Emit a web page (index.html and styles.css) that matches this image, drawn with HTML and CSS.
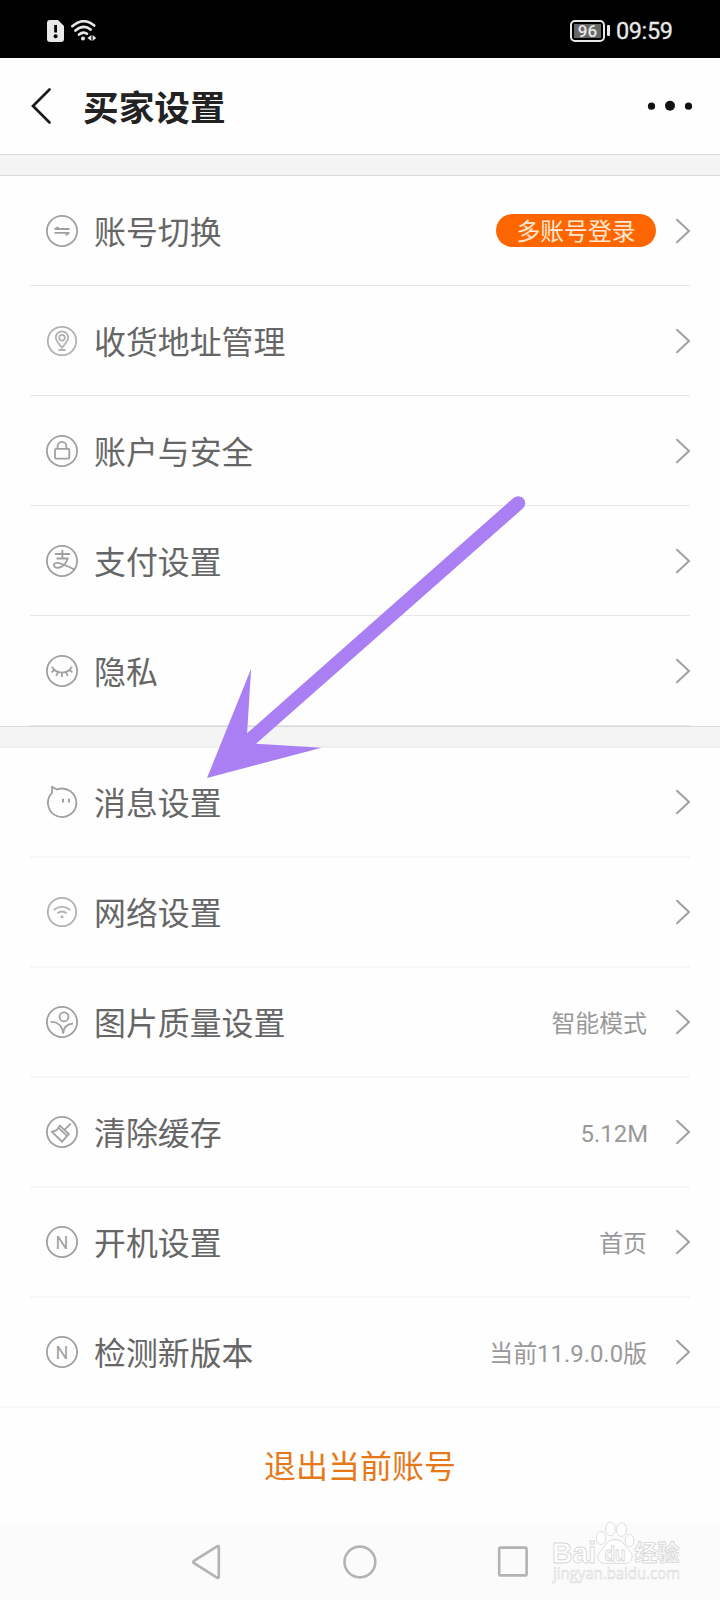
FILE: index.html
```html
<!DOCTYPE html>
<html lang="zh-CN">
<head>
<meta charset="utf-8">
<title>买家设置</title>
<link rel="stylesheet" href="styles.css">
</head>
<body>
<div class="screen">
  <div class="status">
    <div class="status-left">
      <svg width="18" height="22" viewBox="0 0 18 22"><path d="M3 0H11L17 6V19Q17 22 14 22H3Q0 22 0 19V3Q0 0 3 0Z" fill="#e8e8e8"/><path d="M8.6 5V12.5" stroke="#000" stroke-width="2.8"/><circle cx="8.6" cy="16.2" r="2" fill="#000"/></svg>
      <svg width="26" height="22" viewBox="0 0 26 22" fill="none" stroke="#e8e8e8" stroke-width="2.6" stroke-linecap="round"><path d="M1.3 6.2Q12.5-3.6 23.2 5.6"/><path d="M4.4 10.6Q12.5 3.8 19.6 9.6"/><path d="M8 14.6Q12.3 11 16 13.8"/><circle cx="12" cy="18.6" r="2" fill="#e8e8e8" stroke="none"/><path d="M20.4 15V21L16.4 18ZM21.6 15V21L25.2 18Z" fill="#e8e8e8" stroke="none"/></svg>
    </div>
    <div class="status-right">
      <div class="battery"><span class="level">96</span></div><i class="battery-tip"></i>
      <span class="clock">09:59</span>
    </div>
  </div>

  <header class="header">
    <svg class="back" width="22" height="38" viewBox="0 0 22 38" fill="none" stroke="#1a1a1a" stroke-width="2.7" stroke-linecap="round"><path d="M18.5 2.5L2 19L18.5 35.5"/></svg>
    <h1 class="title">买家设置</h1>
    <svg class="more" width="46" height="12" viewBox="0 0 46 12" fill="#111"><circle cx="4.5" cy="6.2" r="3.6"/><circle cx="23" cy="5.8" r="5"/><circle cx="41.5" cy="6.2" r="3.6"/></svg>
  </header>
  <div class="gap gap-top"></div>

  <div class="group">
    <div class="row">
      <svg class="icon" viewBox="0 0 32 32"><circle cx="16" cy="16" r="15.1"/><path d="M8.5 14H23.5M8.5 17.9H23.5M9 14L12.5 11.9M23 17.9L19.6 20.2"/></svg>
      <span class="label">账号切换</span><span class="badge">多账号登录</span>
      <svg class="chev" viewBox="0 0 16 26"><path d="M2 1.7L14 13L2 24.3"/></svg>
    </div>
    <div class="row">
      <svg class="icon pale" viewBox="0 0 32 32"><circle cx="16" cy="16" r="14.2"/><path d="M16 22.7C13.5 19.3 9.8 16.3 9.8 12.6A6.2 6.2 0 0 1 22.2 12.6C22.2 16.3 18.5 19.3 16 22.7ZM12.5 25H19.7"/><circle cx="16" cy="12.7" r="2.8"/></svg>
      <span class="label">收货地址管理</span>
      <svg class="chev" viewBox="0 0 16 26"><path d="M2 1.7L14 13L2 24.3"/></svg>
    </div>
    <div class="row">
      <svg class="icon" viewBox="0 0 32 32"><circle cx="16" cy="16" r="15.1"/><rect x="9" y="13.8" width="14.3" height="9.8" rx="1"/><path d="M11.6 13.6V11.2A4.4 4.4 0 0 1 20.4 11.2V13.6"/></svg>
      <span class="label">账户与安全</span>
      <svg class="chev" viewBox="0 0 16 26"><path d="M2 1.7L14 13L2 24.3"/></svg>
    </div>
    <div class="row">
      <svg class="icon" viewBox="0 0 32 32"><circle cx="16" cy="16" r="15.1"/><path d="M9 9H24M16.4 5V13.5M10.5 13.5H21.6C20.8 17 17.6 22.8 11.6 22.8C7 22.8 6.6 18.2 10.8 17.8C15 17.5 20 20.8 28.8 24.6"/></svg>
      <span class="label">支付设置</span>
      <svg class="chev" viewBox="0 0 16 26"><path d="M2 1.7L14 13L2 24.3"/></svg>
    </div>
    <div class="row">
      <svg class="icon" viewBox="0 0 32 32"><circle cx="16" cy="16" r="15.1"/><path d="M6 11.8C10.5 19.5 21.5 19.5 26 11.8M8.4 15L5.6 17.4M12 17.2L10.2 20.9M16 17.8V22M20 17.2L21.8 20.9M23.6 15L26.4 17.4"/></svg>
      <span class="label">隐私</span>
      <svg class="chev" viewBox="0 0 16 26"><path d="M2 1.7L14 13L2 24.3"/></svg>
    </div>
  </div>
  <div class="gap gap-mid"></div>

  <div class="group light">
    <div class="row">
      <svg class="icon" viewBox="0 0 32 32"><path d="M6 .9L11.2 3.5A14.2 14.2 0 1 1 5.8 7.1C6.4 5.6 6.1 3 6 .9Z"/><path d="M17 12.8V16.6M23 12.8V16.6" stroke-width="2"/></svg>
      <span class="label">消息设置</span>
      <svg class="chev" viewBox="0 0 16 26"><path d="M2 1.7L14 13L2 24.3"/></svg>
    </div>
    <div class="row">
      <svg class="icon pale" viewBox="0 0 32 32"><circle cx="16" cy="16" r="14.2"/><path d="M7.7 14Q16 7.2 24.3 14M11.3 17.4Q16 13.6 20.7 17.4"/><circle cx="16" cy="20.8" r=".6"/></svg>
      <span class="label">网络设置</span>
      <svg class="chev" viewBox="0 0 16 26"><path d="M2 1.7L14 13L2 24.3"/></svg>
    </div>
    <div class="row">
      <svg class="icon" viewBox="0 0 32 32"><circle cx="16" cy="16" r="15.1"/><circle cx="18" cy="10.8" r="4.5"/><path d="M4.8 16C11 15.6 16.6 19.5 17.2 27.6C17.6 21.6 21 17.8 27 17.6"/></svg>
      <span class="label">图片质量设置</span><span class="value">智能模式</span>
      <svg class="chev" viewBox="0 0 16 26"><path d="M2 1.7L14 13L2 24.3"/></svg>
    </div>
    <div class="row">
      <svg class="icon" viewBox="0 0 32 32"><circle cx="16" cy="16" r="15.1"/><path d="M11.8 11.2L21.8 20.6M13.9 9.6L22.8 18L16 25.6L6 15.8L10.6 14.2ZM18.4 13.8L24.8 7.6"/></svg>
      <span class="label">清除缓存</span><span class="value latin">5.12M</span>
      <svg class="chev" viewBox="0 0 16 26"><path d="M2 1.7L14 13L2 24.3"/></svg>
    </div>
    <div class="row">
      <svg class="icon" viewBox="0 0 32 32"><circle cx="16" cy="16" r="15.1"/><text class="letter" x="16" y="22.6">N</text></svg>
      <span class="label">开机设置</span><span class="value">首页</span>
      <svg class="chev" viewBox="0 0 16 26"><path d="M2 1.7L14 13L2 24.3"/></svg>
    </div>
    <div class="row">
      <svg class="icon" viewBox="0 0 32 32"><circle cx="16" cy="16" r="15.1"/><text class="letter" x="16" y="22.6">N</text></svg>
      <span class="label">检测新版本</span><span class="value">当前11.9.0.0版</span>
      <svg class="chev" viewBox="0 0 16 26"><path d="M2 1.7L14 13L2 24.3"/></svg>
    </div>
  </div>

  <div class="logout">退出当前账号</div>

  <nav class="nav">
    <svg width="30" height="36" viewBox="0 0 30 36"><path d="M27.8 2.8V33.2Q27.4 34.4 26 33.6L3 19.2Q1.6 18 3 16.8L26 2.4Q27.4 1.6 27.8 2.8Z"/></svg>
    <svg width="36" height="36" viewBox="0 0 36 36"><circle cx="18.9" cy="18" r="15.4"/></svg>
    <svg width="32" height="32" viewBox="0 0 32 32"><rect x="2.2" y="1.6" width="27.4" height="27.8" rx="1.5"/></svg>
  </nav>

  <svg class="arrow" viewBox="0 0 120 285" width="120" height="285"><path d="M0 283L44.1 173.7L40.1 238.3L306.5 2.9A7 7 0 0 1 315.8 13.5L49 248.7L114.5 252.7Z"/></svg>

  <svg class="watermark" width="140" height="78" viewBox="0 0 140 78">
    <text class="wm-bold" x="2" y="43" font-size="30" textLength="44" lengthAdjust="spacingAndGlyphs">Bai</text>
    <ellipse cx="51" cy="18" rx="4.8" ry="6.5"/><ellipse cx="60.5" cy="9" rx="4.8" ry="6.8"/><ellipse cx="71.5" cy="9.6" rx="5" ry="6.8"/><ellipse cx="79.5" cy="20.5" rx="4.4" ry="6.2"/>
    <path d="M56 24C60 18 70 18 74 24C77 30 83 32 82 38C81 44 75 44 65 43C55 44 49 44 48 38C47 32 53 30 56 24Z"/>
    <text class="wm-du" x="54.5" y="40.5" font-size="20" textLength="21" lengthAdjust="spacingAndGlyphs">du</text>
    <text class="wm-bold" x="84.5" y="41" font-size="22.5">经验</text>
    <text class="wm-url" x="3" y="58.5" font-size="17" textLength="127" lengthAdjust="spacingAndGlyphs">jingyan.baidu.com</text>
  </svg>
</div>
</body>
</html>
```
FILE: styles.css
```css
* { box-sizing: border-box; }
body { margin: 0; font-family: Roboto, "Noto Sans CJK SC", sans-serif; background: #fff; }
svg { display: block; flex: none; }
.screen { position: relative; width: 720px; height: 1600px; overflow: hidden; background: #fefefe; }

.status { height: 58px; background: #000; color: #e8e8e8; display: flex; justify-content: space-between; align-items: center; padding: 3px 47px 0 47px; }
.status-left { display: flex; gap: 6px; }
.status-right { display: flex; align-items: center; }
.battery { width: 35px; height: 22px; border: 2px solid #e8e8e8; border-radius: 5px; padding: 2px; }
.level { display: block; height: 14px; background: #666; font-size: 17px; font-weight: 500; line-height: 15px; text-align: center; }
.battery-tip { width: 3px; height: 11px; margin-left: 2px; border-radius: 1px; background: #e8e8e8; }
.clock { font-size: 23.5px; font-weight: 400; line-height: 28px; width: 57px; margin: 1px 0 0 6px; letter-spacing: -.4px; -webkit-text-stroke: .3px #e8e8e8; }

.header { height: 96px; display: flex; align-items: center; padding: 0 27px 0 31px; }
.title { margin: 5px auto 0 30px; font-size: 35.7px; font-weight: 700; line-height: 50px; color: #222; }
.gap { background: #f4f4f4; }
.gap-top { height: 22px; border-top: 1px solid #d9d9d9; border-bottom: 1px solid #d9d9d9; }
.gap-mid { height: 22px; border-top: 1px solid #d9d9d9; border-bottom: 2px solid #efefef; }

.row { height: 110px; margin: 0 30px; padding: 0 0 0 16px; display: flex; align-items: center; border-bottom: 1px solid #e7e7e7; }
.light .row { border-bottom: 2px solid #f6f6f6; }
.light .row:last-child { margin: 0; padding: 0 30px 0 46px; }
.icon { width: 32px; height: 32px; fill: none; stroke: #a0a0a0; stroke-width: 1.8; }
.icon.pale { stroke: #b2b2b2; }
.letter { font-size: 18px; text-anchor: middle; fill: #a0a0a0; stroke: none; }
.label { margin: 5px auto 0 16px; font-size: 31.9px; line-height: 46px; color: #666; }
.light .label { margin-top: 4px; }
.value { margin: 3px 28px 0 0; font-size: 23.9px; line-height: 34px; color: #999; }
.value.latin { margin-right: 27px; }
.badge { width: 160px; height: 33px; margin-right: 19px; border-radius: 17px; background: #ff6600; color: #ffe9d6; font-size: 23.8px; line-height: 36px; text-align: center; }
.chev { width: 16px; height: 26px; margin-right: -1px; fill: none; stroke: #a0a0a0; stroke-width: 2; stroke-linecap: round; }

.logout { height: 115px; padding-bottom: 4px; display: flex; align-items: center; justify-content: center; font-size: 32px; color: #e67817; }
.nav { height: 77px; background: #fbfbfb; display: flex; align-items: center; justify-content: space-between; padding: 0 191px; }
.nav svg { fill: none; stroke: #b3b3b3; stroke-width: 2.6; }

.arrow { position: absolute; left: 207px; top: 495px; overflow: visible; fill: #a97ff3; }
.watermark { position: absolute; left: 550px; top: 1520px; overflow: visible; fill: #fefefe; stroke: #d8d8d8; stroke-width: .9; }
.wm-bold { font-family: "Liberation Sans", "Noto Sans CJK SC", sans-serif; font-weight: 700; }
.wm-du { font-family: "Liberation Sans", sans-serif; font-weight: 700; }
.wm-url { font-family: "Open Sans", sans-serif; stroke-width: .6; }
```
